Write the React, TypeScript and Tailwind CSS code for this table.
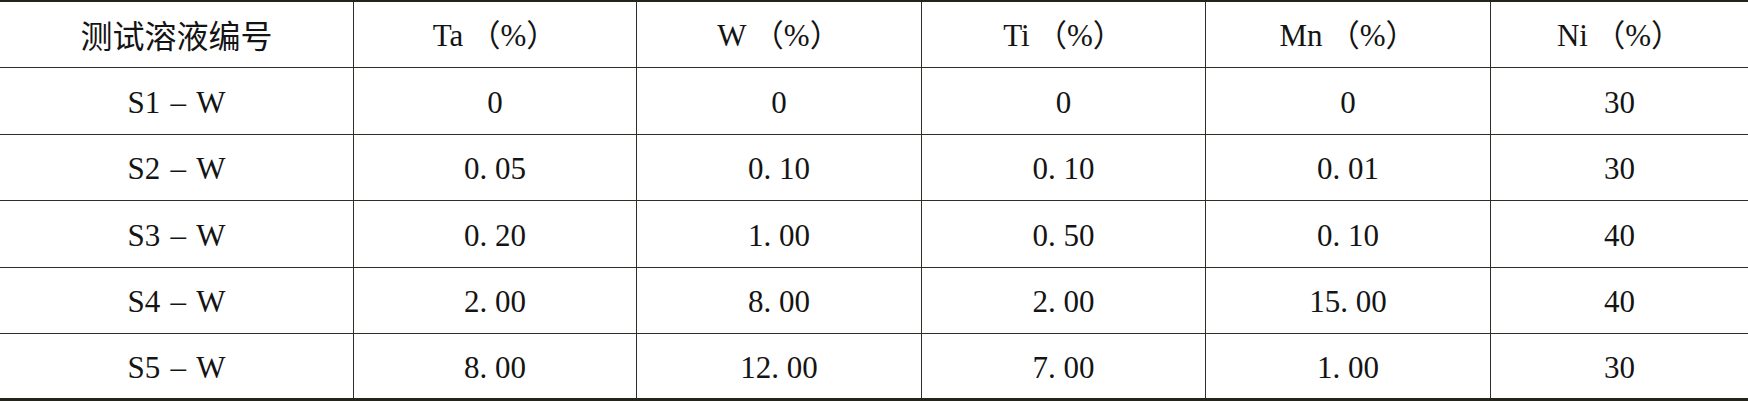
import React from 'react';

const headers = ['测试溶液编号', 'Ta\u2009（%）', 'W\u2009（%）', 'Ti\u2009（%）', 'Mn\u2009（%）', 'Ni\u2009（%）'];

const rows: string[][] = [
  ['S1\u2004–\u2004W', '0', '0', '0', '0', '30'],
  ['S2\u2004–\u2004W', '0. 05', '0. 10', '0. 10', '0. 01', '30'],
  ['S3\u2004–\u2004W', '0. 20', '1. 00', '0. 50', '0. 10', '40'],
  ['S4\u2004–\u2004W', '2. 00', '8. 00', '2. 00', '15. 00', '40'],
  ['S5\u2004–\u2004W', '8. 00', '12. 00', '7. 00', '1. 00', '30'],
];

// row heights alternate so the rules land on 67/134/200/267/333
const rowHeights = ['h-[66px]', 'h-[67px]', 'h-[66px]', 'h-[67px]', 'h-[66px]', 'h-[64px]'];

const gridCols = 'grid grid-cols-[353px_283px_285px_284px_285px_1fr]';

const Row: React.FC<{ cells: string[]; height: string; last?: boolean; header?: boolean }> = ({
  cells,
  height,
  last,
  header,
}) => (
  <div className={`${gridCols} ${height} ${last ? '' : 'border-b border-[#2e2e26]'}`}>
    {cells.map((c, i) => (
      <div
        key={i}
        className={`flex items-center justify-center pt-[4px] ${
          i > 0 ? 'border-l-[1.5px] border-[#2e2e26]' : ''
        } ${header && i === 0 ? 'text-[32px]' : 'text-[31px]'}`}
      >
        <span className="whitespace-pre">{c}</span>
      </div>
    ))}
  </div>
);

export default function App() {
  return (
    <div
      className="w-[1748px] h-[401px] bg-white text-[#141414] overflow-hidden"
      style={{ fontFamily: '"Liberation Serif", "Noto Sans CJK SC", serif' }}
    >
      <div className="border-t-2 border-b-[3px] border-[#24241a]">
        <Row cells={headers} height={rowHeights[0]} header />
        {rows.map((r, i) => (
          <Row key={i} cells={r} height={rowHeights[i + 1]} last={i === rows.length - 1} />
        ))}
      </div>
    </div>
  );
}
